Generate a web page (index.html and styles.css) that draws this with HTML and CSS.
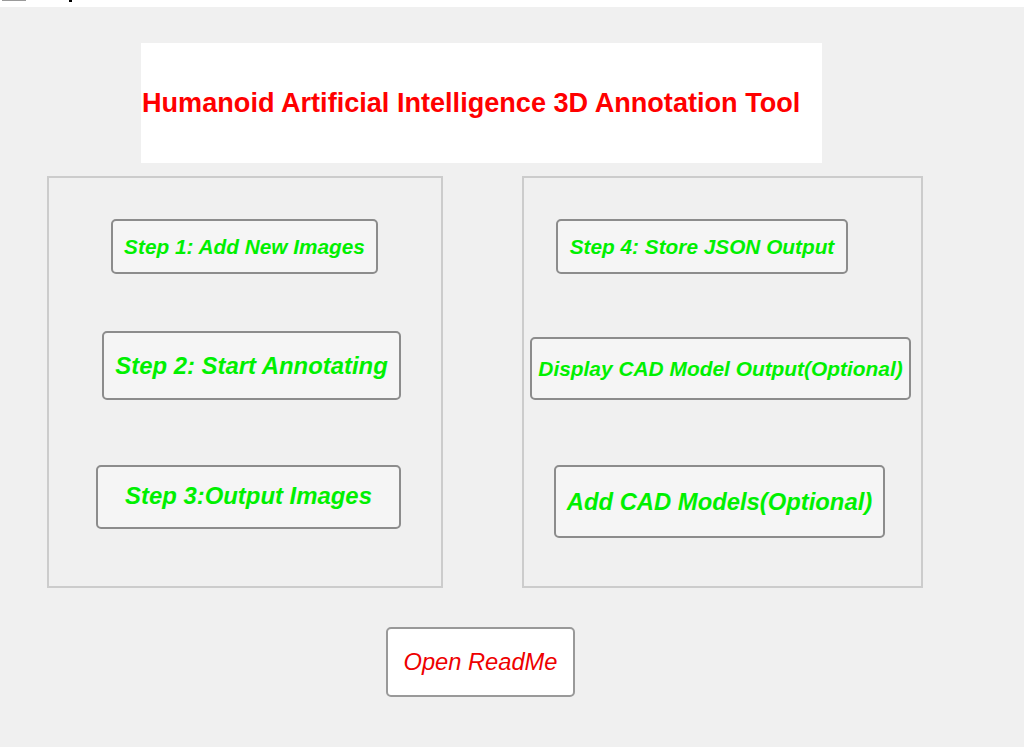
FILE: index.html
```html
<!DOCTYPE html>
<html lang="en">
<head>
<meta charset="utf-8">
<title>Humanoid Artificial Intelligence 3D Annotation Tool</title>
<link rel="stylesheet" href="styles.css">
</head>
<body>
<div class="topstrip">
  <span class="mark-gray"></span>
  <span class="mark-black"></span>
</div>
<main class="app">
  <header class="title-box">
    <h1 class="title">Humanoid Artificial Intelligence 3D Annotation Tool</h1>
  </header>
  <section class="panels">
    <div class="panel panel-left">
      <button class="btn btn1">Step 1: Add New Images</button>
      <button class="btn btn2">Step 2: Start Annotating</button>
      <button class="btn btn3">Step 3:Output Images</button>
    </div>
    <div class="panel panel-right">
      <button class="btn btn4">Step 4: Store JSON Output</button>
      <button class="btn btn5">Display CAD Model Output(Optional)</button>
      <button class="btn btn6">Add CAD Models(Optional)</button>
    </div>
  </section>
  <button class="readme">Open ReadMe</button>
</main>
</body>
</html>
```

FILE: styles.css
```css
* { box-sizing: border-box; }

html, body {
  margin: 0;
  padding: 0;
  background: #f0f0f0;
  font-family: "Liberation Sans", Arial, sans-serif;
}

body {
  width: 1024px;
  height: 747px;
  overflow: hidden;
}

.topstrip {
  height: 7px;
  background: #ffffff;
  display: flex;
  align-items: flex-start;
}

.mark-gray {
  width: 24px;
  height: 1px;
  margin-left: 2px;
  background: #9a9a9a;
}

.mark-black {
  width: 3px;
  height: 2px;
  margin-left: 43px;
  background: #000;
}

.app {
  display: flex;
  flex-direction: column;
  align-items: flex-start;
}

.title-box {
  margin-top: 36px;
  margin-left: 141px;
  width: 681px;
  height: 120px;
  background: #ffffff;
  display: flex;
  align-items: center;
  padding-left: 1px;
  padding-bottom: 1px;
}

.title {
  margin: 0;
  font-size: 27.1px;
  font-weight: bold;
  color: #ff0000;
  white-space: nowrap;
}

.panels {
  margin-top: 13px;
  margin-left: 47px;
  display: flex;
  gap: 79px;
}

.panel {
  height: 412px;
  border: 2px solid #cccccc;
  display: flex;
  flex-direction: column;
  align-items: flex-start;
}

.panel-left { width: 396px; }
.panel-right { width: 401px; }

.btn {
  font-family: "Liberation Sans", Arial, sans-serif;
  font-weight: bold;
  font-style: italic;
  color: #00f000;
  background: #f5f5f5;
  border: 2px solid #8c8c8c;
  border-radius: 5px;
  display: flex;
  align-items: center;
  justify-content: center;
  padding: 0;
  white-space: nowrap;
}

.btn1 { margin: 41px 0 0 62px; width: 267px; height: 55px; font-size: 20.8px; }
.btn2 { margin: 57px 0 0 53px; width: 299px; height: 69px; font-size: 23.9px; }
.btn3 { margin: 65px 0 0 47px; width: 305px; height: 64px; font-size: 23.9px; padding-bottom: 2px; }
.btn4 { margin: 41px 0 0 32px; width: 292px; height: 55px; font-size: 20.8px; }
.btn5 { margin: 63px 0 0 6px;  width: 381px; height: 63px; font-size: 20.9px; }
.btn6 { margin: 65px 0 0 30px; width: 331px; height: 73px; font-size: 23.8px; }

.readme {
  margin-top: 39px;
  margin-left: 386px;
  width: 189px;
  height: 70px;
  background: #ffffff;
  border: 2px solid #999999;
  border-radius: 5px;
  font-family: "Liberation Sans", Arial, sans-serif;
  font-style: italic;
  font-size: 23.7px;
  color: #ee0000;
  display: flex;
  align-items: center;
  justify-content: center;
  padding: 0;
}
```
